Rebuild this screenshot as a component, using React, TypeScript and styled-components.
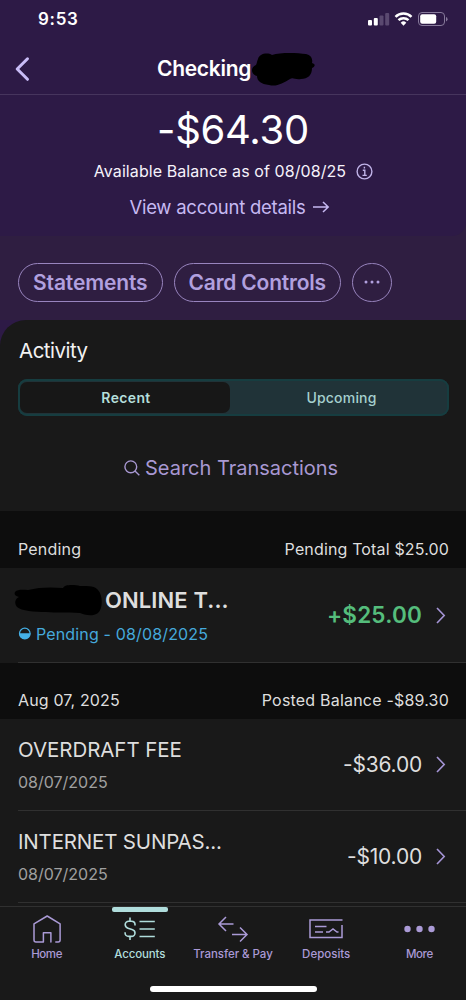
import React from "react";
import styled, { createGlobalStyle } from "styled-components";

const Global = createGlobalStyle`
  * { box-sizing: border-box; }
  body { margin: 0; background: #191919; font-family: Inter, "Liberation Sans", sans-serif; }
  button { font: inherit; color: inherit; background: none; border: 0; padding: 0; }
  svg { display: block; flex: none; overflow: visible; }
`;

const Screen = styled.main`
  width: 466px;
  height: 1000px;
  overflow: hidden;
  display: flex;
  flex-direction: column;
  background: #2f1e41;
`;

const Label = styled.span<{ $size: number; $line?: number; $weight?: number; $track?: number; $color?: string }>`
  display: block;
  white-space: pre;
  font-size: ${(p) => p.$size}px;
  line-height: ${(p) => p.$line ?? 24}px;
  font-weight: ${(p) => p.$weight ?? 400};
  letter-spacing: ${(p) => p.$track ?? 0}px;
  color: ${(p) => p.$color ?? "#dedede"};
`;

/* ---------- Header ---------- */

const Hero = styled.header`
  height: 236px;
  flex: none;
  background: #2d1a46;
  border-bottom-right-radius: 14px;
`;

const StatusBar = styled.div`
  height: 38px;
  padding: 0 18px 0 38px;
  display: flex;
  align-items: center;
  justify-content: space-between;
`;

const TitleBar = styled.div`
  height: 57px;
  padding: 5px 0 0 15px;
  display: flex;
  align-items: center;
  border-bottom: 1px solid #46355d;
`;

const Title = styled.h1`
  margin: 0 0 0 128px;
  display: flex;
  align-items: center;
  gap: 1px;
`;

const Balance = styled.div`
  display: flex;
  flex-direction: column;
  align-items: center;
  padding-top: 10px;
`;

const BalanceCaption = styled.div`
  display: flex;
  align-items: center;
  gap: 10px;
  margin: 4px 0 12px 1px;
`;

const DetailsLink = styled.button`
  display: flex;
  align-items: center;
  gap: 7px;
  margin-right: 8px;
`;

const Actions = styled.div`
  height: 84px;
  flex: none;
  padding: 27px 0 0 18px;
  display: flex;
  gap: 11.5px;
`;

const Pill = styled.button<{ $width: number }>`
  width: ${(p) => p.$width}px;
  height: 38.5px;
  display: flex;
  align-items: center;
  justify-content: center;
  border: 1.4px solid #9884be;
  border-radius: 20px;
`;

/* ---------- Activity ---------- */

const SheetBack = styled.div`
  flex: 1;
  background: #2d1a46;
`;

const Sheet = styled.section`
  height: 100%;
  background: #191919;
  border-top-left-radius: 26px;
  padding-top: 16px;
  display: flex;
  flex-direction: column;
`;

const Heading = styled.h2`
  margin: 0 0 13px 19px;
`;

const Segments = styled.div`
  height: 37px;
  flex: none;
  margin: 0 17px 0 18px;
  padding: 3px 2px;
  display: flex;
  background: #203338;
  box-shadow: inset 0 0 0 2px #163d40;
  border-radius: 9px;
`;

const Segment = styled.button<{ $on?: boolean }>`
  flex: ${(p) => (p.$on ? "0 0 210px" : "1")};
  display: flex;
  align-items: center;
  justify-content: center;
  padding-left: ${(p) => (p.$on ? 2 : 6)}px;
  border-radius: 7px;
  background: ${(p) => (p.$on ? "#171717" : "transparent")};
`;

const Search = styled.button`
  height: 24px;
  margin: 40px 0 31px 124px;
  display: flex;
  align-items: center;
  gap: 5px;
`;

const Band = styled.div<{ $height: number }>`
  height: ${(p) => p.$height}px;
  flex: none;
  padding: 0 17px 9px 18px;
  display: flex;
  align-items: flex-end;
  justify-content: space-between;
  background: #0d0d0d;
`;

const Row = styled.article<{ $height: number }>`
  height: ${(p) => p.$height}px;
  flex: none;
  margin-left: 18px;
  padding-right: 21px;
  display: flex;
  align-items: center;
  justify-content: space-between;
  border-bottom: 1px solid #303030;
`;

const RowText = styled.div<{ $gap: number; $top?: number; $bottom?: number }>`
  display: flex;
  flex-direction: column;
  gap: ${(p) => p.$gap}px;
  padding: ${(p) => p.$top ?? 0}px 0 ${(p) => p.$bottom ?? 0}px;
`;

const Inline = styled.div<{ $gap: number }>`
  display: flex;
  align-items: center;
  gap: ${(p) => p.$gap}px;
`;

const NameMask = styled.svg`
  margin-left: -3px;
`;

/* ---------- Tab bar ---------- */

const TabBar = styled.nav`
  height: 94px;
  flex: none;
  display: flex;
  flex-direction: column;
  align-items: center;
  background: #191919;
  border-top: 1px solid #303030;
`;

const Tabs = styled.div`
  width: 100%;
  height: 79px;
  display: grid;
  grid-template-columns: repeat(5, 1fr);
`;

const Tab = styled.button`
  display: flex;
  flex-direction: column;
  align-items: center;
`;

const Marker = styled.i<{ $on?: boolean }>`
  width: 56px;
  height: 5px;
  flex: none;
  border-radius: 2px;
  background: ${(p) => (p.$on ? "#b0dddc" : "transparent")};
`;

const TabIcon = styled.span`
  height: 34px;
  display: flex;
  align-items: center;
`;

const HomeBar = styled.i`
  width: 167px;
  height: 6px;
  border-radius: 3px;
  background: #fff;
`;

const Next = () => (
  <svg width="9" height="17" viewBox="0 0 9 17" fill="none" stroke="#a595d6" strokeWidth="1.6">
    <path d="M1 1l7.2 7.5L1 16" />
  </svg>
);

const lilac = "#aa9ad6";
const mint = "#b0dddc";

const tabs = [
  {
    name: "Home", track: -0.4,
    icon: (
      <svg width="28" height="28" viewBox="0 0 28 28" fill="none" stroke={lilac} strokeWidth="1.5" strokeLinejoin="round" strokeLinecap="round">
        <path d="M22.8 27h2.3a2 2 0 0 0 2-2V8.8L14.2 1 1 8.8V25a2 2 0 0 0 2 2h7.4V17.8h7.5V27" />
      </svg>
    ),
  },
  {
    name: "Accounts", track: -0.12, on: true,
    icon: (
      <svg width="31" height="24" viewBox="0 0 31 24" fill="none" stroke={mint} strokeWidth="1.6">
        <path d="M6 .5v4M6 19.500v3.500M11 8.500V7.600C11 5.700 9.500 4.300 7.500 4.300H4.700C2.700 4.300 1.200 5.700 1.200 7.600S2.400 10.800 4 11.300l4 1.200c1.800.5 3 1.700 3 3.500s-1.500 3.400-3.500 3.400H4.700c-2 0-3.600-1.400-3.600-3.400v-.8M15.500 4.500h15.300M15.500 12h15.300M15.500 19.500h15.300" />
      </svg>
    ),
  },
  {
    name: "Transfer & Pay", track: -0.04,
    icon: (
      <svg width="30" height="27" viewBox="0 0 30 27" fill="none" stroke={lilac} strokeWidth="1.5">
        <path d="M8 1L1 8l7 7M1 8h14.500M22 11.500l7 7-7 7M29 18.500H14" />
      </svg>
    ),
  },
  {
    name: "Deposits", track: 0,
    icon: (
      <svg width="34" height="20" viewBox="0 0 34 20" fill="none" stroke={lilac} strokeWidth="1.5">
        <path d="M33.500 1H1v17.500h32V6M6 7.500h11.500M6 13h8M17 13h3l4-3 4 3h1.500" />
      </svg>
    ),
  },
  {
    name: "More", track: -0.38,
    icon: (
      <svg width="31" height="7" viewBox="0 0 31 7" fill={lilac}>
        <circle cx="3.500" cy="3" r="3.200" />
        <circle cx="15.500" cy="3" r="3.200" />
        <circle cx="27.500" cy="3" r="3.200" />
      </svg>
    ),
  },
];

const posted = [
  { name: "OVERDRAFT FEE", track: -0.06, amount: "-$36.00" },
  { name: "INTERNET SUNPAS...", track: -0.18, amount: "-$10.00" },
];

export default function App() {
  return (
    <Screen>
      <Global />
      <Hero>
        <StatusBar>
          <Label $size={17} $weight={600} $track={0.7} $color="#fff">9:53</Label>
          <svg width="80" height="15" viewBox="0 0 80 15">
            <rect x="0" y="8" width="4" height="5.600" rx="1" fill="#fff" />
            <rect x="5.800" y="6" width="4" height="7.600" rx="1" fill="#fff" />
            <rect x="11.500" y="3.500" width="4" height="10.100" rx="1" fill="#5a4970" />
            <rect x="17.200" y="1" width="4" height="12.600" rx="1" fill="#5a4970" />
            <g fill="none" stroke="#fff" strokeWidth="2.500">
              <path d="M27.500 4.900a11.300 11.300 0 0 1 16 0" />
              <path d="M30.500 8.200a7.100 7.100 0 0 1 10 0" />
            </g>
            <path d="M32.700 10.700a4 4 0 0 1 5.600 0L35.500 13.700z" fill="#fff" />
            <rect x="50.500" y=".5" width="26" height="13" rx="3.500" fill="none" stroke="#86799a" />
            <rect x="52.200" y="2.200" width="16" height="9.600" rx="2" fill="#fff" />
            <path d="M78 5v4.400q1.600-.6 1.600-2.200T78 5z" fill="#86799a" />
          </svg>
        </StatusBar>
        <TitleBar>
          <svg width="14" height="24" viewBox="0 0 14 24" fill="none" stroke="#c9bcf7" strokeWidth="3" strokeLinecap="round" strokeLinejoin="round">
            <path d="M12.500 1.800L2.200 12l10.300 10.300" />
          </svg>
          <Title>
            <Label $size={21} $weight={600} $track={-0.3} $color="#fff">Checking</Label>
            <svg width="63" height="31" viewBox="0 0 63 31" fill="#000">
              <path d="M6 6C7 1 15-1 20 2 29-1 46 0 54 1 59 2 61 6 60 10 64 11 63 14 60 15 60 22 56 26 49 26 43 27 41 24 38 26 31 30 25 34 17 32 9 31 5 28 5 23-1 22-2 14 4 12 5 10 5 8 6 6z" />
            </svg>
          </Title>
        </TitleBar>
        <Balance>
          <Label $size={40} $line={50} $track={-0.25} $color="#fff">-$64.30</Label>
          <BalanceCaption>
            <Label $size={16} $track={0.08} $color="#f6f2fb">Available Balance as of 08/08/25</Label>
            <svg width="17" height="17" viewBox="0 0 17 17" fill="none" stroke="#c0b3e8" strokeWidth="1.400">
              <circle cx="8.500" cy="8.500" r="7.400" />
              <path d="M6.800 7.300h2v5M6.500 12.400h4.300M8.400 3.800v1.700" />
            </svg>
          </BalanceCaption>
          <DetailsLink>
            <Label $size={18.5} $track={-0.25} $color="#c6b9f2">View account details</Label>
            <svg width="16" height="12" viewBox="0 0 16 12" fill="none" stroke="#c6b9f2" strokeWidth="1.500">
              <path d="M0 6h15M10 1l5.200 5L10 11" />
            </svg>
          </DetailsLink>
        </Balance>
      </Hero>

      <Actions>
        <Pill $width={144.5}>
          <Label $size={21} $line={27} $weight={600} $track={-0.14} $color="#b1a0df">Statements</Label>
        </Pill>
        <Pill $width={166.5}>
          <Label $size={21} $line={27} $weight={600} $track={-0.2} $color="#b1a0df">Card Controls</Label>
        </Pill>
        <Pill $width={39.5}>
          <svg width="16" height="4" viewBox="0 0 16 4" fill="#b1a0df">
            <circle cx="2" cy="2" r="1.500" />
            <circle cx="8" cy="2" r="1.500" />
            <circle cx="14" cy="2" r="1.500" />
          </svg>
        </Pill>
      </Actions>

      <SheetBack>
        <Sheet>
          <Heading>
            <Label $size={20.5} $line={30} $track={-0.5} $color="#f2f2f2">Activity</Label>
          </Heading>
          <Segments>
            <Segment $on>
              <Label $size={14} $weight={600} $track={0.35} $color="#b4dedb">Recent</Label>
            </Segment>
            <Segment>
              <Label $size={14} $weight={500} $track={0.2} $color="#a5d0ce">Upcoming</Label>
            </Segment>
          </Segments>
          <Search>
            <svg width="16" height="16" viewBox="0 0 16 16" fill="none" stroke="#a898d2" strokeWidth="1.400">
              <circle cx="6.800" cy="6.800" r="5.900" />
              <path d="M11 11l4.300 4.300" />
            </svg>
            <Label $size={20} $track={-0.01} $color="#a898d2">Search Transactions</Label>
          </Search>

          <Band $height={57}>
            <Label $size={16} $line={20} $track={0.2}>Pending</Label>
            <Label $size={16} $line={20} $track={0.15}>Pending Total $25.00</Label>
          </Band>
          <Row $height={95}>
            <RowText $gap={9} $bottom={2}>
              <Inline $gap={3}>
                <NameMask width="87" height="30" viewBox="0 0 87 30" fill="#000">
                  <path d="M0 7C3 4 8 5 13 5 24 2 37 2 48 3 50-1 60 0 65 1 75 1 80 1 83 5 88 10 88 24 83 28 78 32 69 30 65 28 50 27 42 28 31 27 20 27 6 26 2 22-1 18 0 14 4 12 0 11-1 9 0 7z" />
                </NameMask>
                <Label $size={22} $line={26} $weight={600} $track={0.1}>ONLINE T...</Label>
              </Inline>
              <Inline $gap={5}>
                <svg width="13" height="13" viewBox="0 0 13 13">
                  <circle cx="6.800" cy="6.500" r="5.300" fill="none" stroke="#45b0e6" strokeWidth="1.200" />
                  <path d="M1.100 6.300h11.400a5.700 5.700 0 0 1-11.400 0z" fill="#45b0e6" />
                </svg>
                <Label $size={16} $line={20} $track={0.15} $color="#45a9dc">Pending - 08/08/2025</Label>
              </Inline>
            </RowText>
            <Inline $gap={14}>
              <Label $size={22.5} $weight={600} $track={0.2} $color="#55bd7c">+$25.00</Label>
              <Next />
            </Inline>
          </Row>

          <Band $height={56}>
            <Label $size={16} $line={20} $track={0.15}>Aug 07, 2025</Label>
            <Label $size={16} $line={20} $track={0.2}>Posted Balance -$89.30</Label>
          </Band>
          {posted.map((t) => (
            <Row $height={92} key={t.name}>
              <RowText $gap={8} $top={3}>
                <Label $size={20.5} $track={t.track}>{t.name}</Label>
                <Label $size={16} $color="#a0a0a0">08/07/2025</Label>
              </RowText>
              <Inline $gap={14}>
                <Label $size={21} $track={-0.2}>{t.amount}</Label>
                <Next />
              </Inline>
            </Row>
          ))}
        </Sheet>
      </SheetBack>

      <TabBar>
        <Tabs>
          {tabs.map((t) => (
            <Tab key={t.name}>
              <Marker $on={t.on} />
              <TabIcon>{t.icon}</TabIcon>
              <Label $size={11.5} $line={16} $weight={500} $track={t.track} $color={t.on ? mint : lilac}>{t.name}</Label>
            </Tab>
          ))}
        </Tabs>
        <HomeBar />
      </TabBar>
    </Screen>
  );
}
